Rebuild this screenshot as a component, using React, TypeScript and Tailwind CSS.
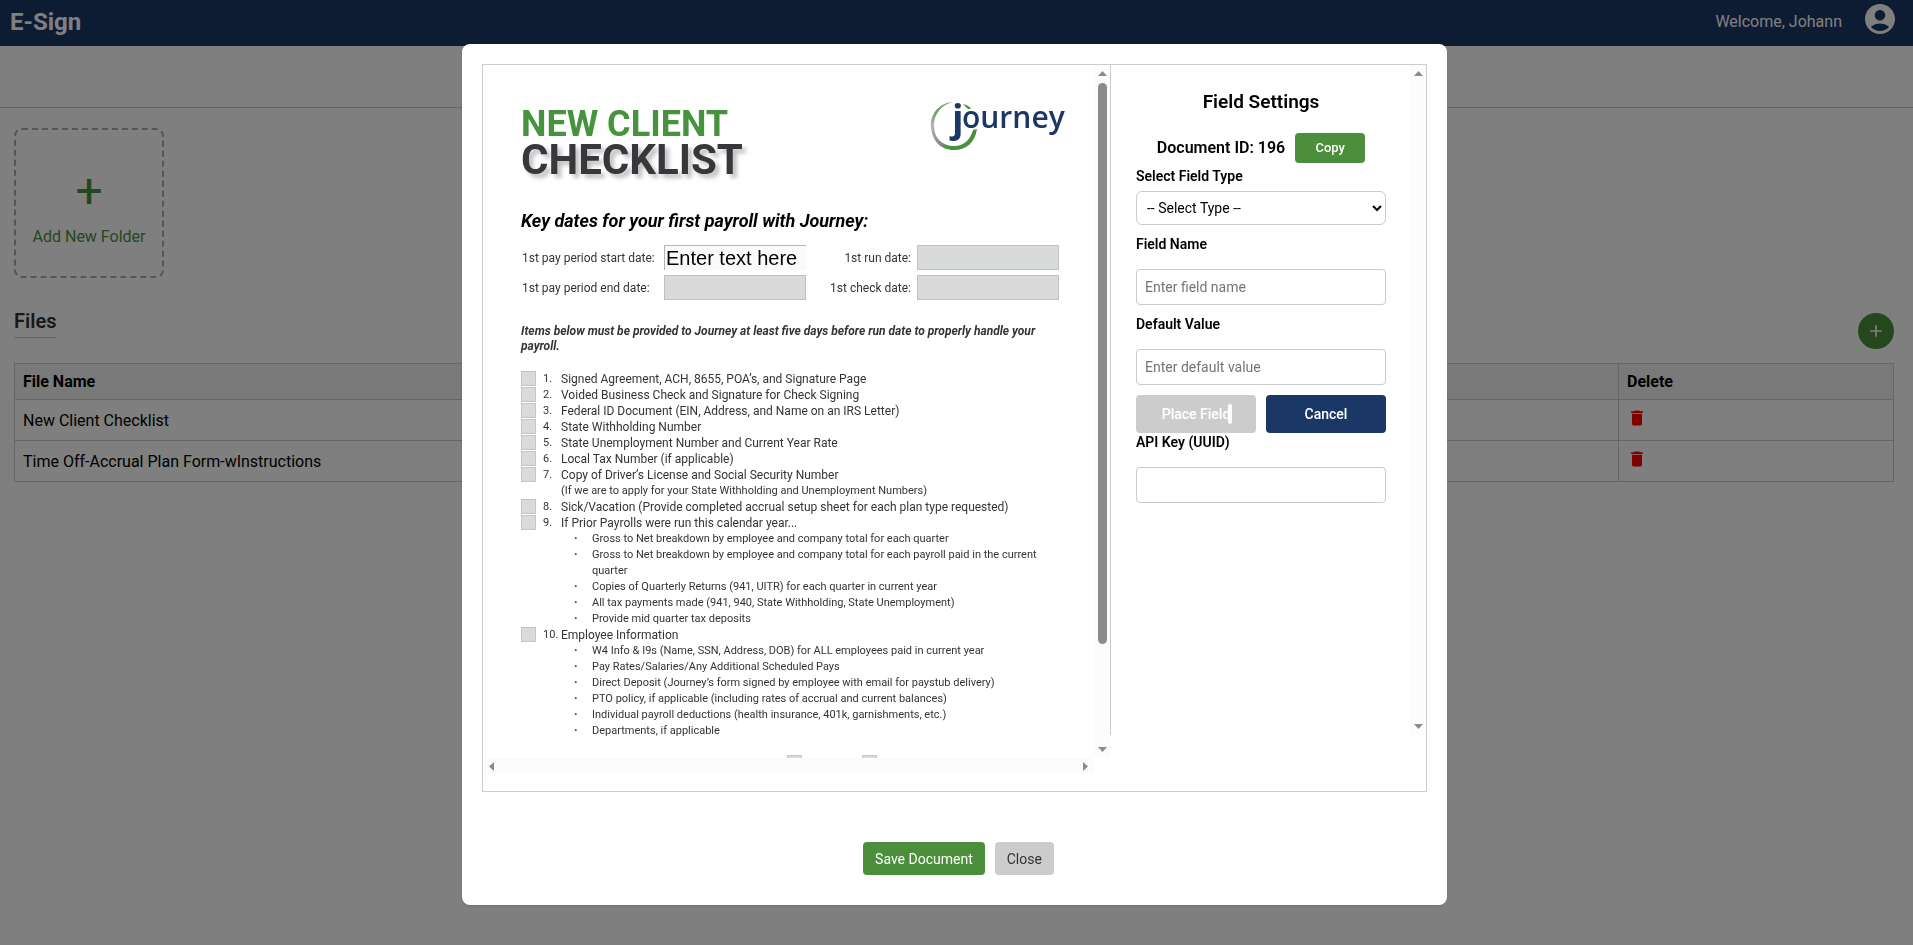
import { MdAccountCircle, MdAdd, MdDelete } from 'react-icons/md';

const files = ['New Client Checklist', 'Time Off-Accrual Plan Form-wInstructions'];

type Item = { n: number; text: string; note?: string; sub?: string[] };

const items: Item[] = [
    { n: 1, text: 'Signed Agreement, ACH, 8655, POA’s, and Signature Page' },
    { n: 2, text: 'Voided Business Check and Signature for Check Signing' },
    { n: 3, text: 'Federal ID Document (EIN, Address, and Name on an IRS Letter)' },
    { n: 4, text: 'State Withholding Number' },
    { n: 5, text: 'State Unemployment Number and Current Year Rate' },
    { n: 6, text: 'Local Tax Number (if applicable)' },
    {
        n: 7,
        text: 'Copy of Driver’s License and Social Security Number',
        note: '(If we are to apply for your State Withholding and Unemployment Numbers)',
    },
    { n: 8, text: 'Sick/Vacation (Provide completed accrual setup sheet for each plan type requested)' },
    {
        n: 9,
        text: 'If Prior Payrolls were run this calendar year...',
        sub: [
            'Gross to Net breakdown by employee and company total for each quarter',
            'Gross to Net breakdown by employee and company total for each payroll paid in the current quarter',
            'Copies of Quarterly Returns (941, UITR) for each quarter in current year',
            'All tax payments made (941, 940, State Withholding, State Unemployment)',
            'Provide mid quarter tax deposits',
        ],
    },
    {
        n: 10,
        text: 'Employee Information',
        sub: [
            'W4 Info & I9s (Name, SSN, Address, DOB) for ALL employees paid in current year',
            'Pay Rates/Salaries/Any Additional Scheduled Pays',
            'Direct Deposit (Journey’s form signed by employee with email for paystub delivery)',
            'PTO policy, if applicable (including rates of accrual and current balances)',
            'Individual payroll deductions (health insurance, 401k, garnishments, etc.)',
            'Departments, if applicable',
        ],
    },
];

type Direction = 'up' | 'down' | 'left' | 'right';

const arrowPaths: Record<Direction, string> = {
    up: 'M0 7 L4.5 2 L9 7 Z',
    down: 'M0 2 L4.5 7 L9 2 Z',
    left: 'M7 0 L2 4.5 L7 9 Z',
    right: 'M2 0 L7 4.5 L2 9 Z',
};

function Arrow({ direction }: { direction: Direction }) {
    return (
        <svg viewBox="0 0 9 9" className="size-[9px] shrink-0" fill="#8b8b8b" aria-hidden="true">
            <path d={arrowPaths[direction]} />
        </svg>
    );
}

function JourneyLogo() {
    return (
        <svg viewBox="0 0 140 52" className="-mr-1 h-[52px] w-[140px] overflow-visible" role="img" aria-label="journey">
            <defs>
                <linearGradient id="ring" x1="0" y1="0" x2="1" y2="1">
                    <stop offset="0.1" stopColor="#4b8f3c" />
                    <stop offset="0.25" stopColor="#b5b5b5" />
                    <stop offset="0.5" stopColor="#8d8d8d" />
                    <stop offset="0.68" stopColor="#4b8f3c" />
                </linearGradient>
            </defs>
            <path
                d="M27 1 C13 2 4 13 5 26 C6 40 15 49 28 49 C41 49 49 41 51 28 L47 29 C44 39 38 45 28 45 C16 45 8 37 8 25 C8 13 15 4 27 1 Z"
                fill="url(#ring)"
            />
            <path d="M37 3 C41 4 43 5 45 8 L42 8 C40 6 39 5 37 3 Z" fill="#4b8f3c" />
            <g fill="#1a3766" stroke="#fff" strokeWidth="2" paintOrder="stroke">
                <text x="26" y="31" className="text-[38px] font-bold [font-family:'Open_Sans',sans-serif]">
                    j
                </text>
                <text x="36" y="27" className="text-[30px] font-semibold [font-family:'Open_Sans',sans-serif]">
                    ourney
                </text>
            </g>
        </svg>
    );
}

function Checklist() {
    return (
        <ol className="mt-[17px] text-xs/4 text-[#333436]">
            {items.map((item) => (
                <li key={item.n} className="grid grid-cols-[22px_18px_1fr]">
                    <input
                        type="checkbox"
                        aria-label={item.text}
                        className="h-[15px] w-[15px] appearance-none border border-[#c3c6c5] bg-[#d8dbda]"
                    />
                    <span className="text-[11px]/4">{item.n}.</span>
                    <span>{item.text}</span>
                    {item.note && <span className="col-start-3 text-[11px]/4">{item.note}</span>}
                    {item.sub && (
                        <ul className="col-start-3 pl-[13px] text-[11px]/4">
                            {item.sub.map((line) => (
                                <li key={line} className="grid grid-cols-[18px_1fr]">
                                    <span className="font-black">·</span>
                                    <span>{line}</span>
                                </li>
                            ))}
                        </ul>
                    )}
                </li>
            ))}
        </ol>
    );
}

function DateField({ id, label, value }: { id: string; label: string; value?: string }) {
    return (
        <>
            <label htmlFor={id} className="text-xs/4 text-[#333436]">
                {label}
            </label>
            {value ? (
                <input
                    id={id}
                    defaultValue={value}
                    className="h-[25px] w-full border-t border-l border-[#b4b4b4] bg-[#fafafa] pl-px text-xl/6 text-black [font-family:'Liberation_Sans',sans-serif]"
                />
            ) : (
                <input id={id} className="h-[25px] w-full border border-[#bfc1c0] bg-[#d8dbda]" />
            )}
        </>
    );
}

function PdfPage() {
    return (
        <div className="h-[693px] min-w-0 overflow-hidden pr-8 pl-[38px] [grid-area:page]">
            <div className="flex items-start justify-between pt-9">
                <h1 className="pt-[5px] font-bold">
                    <span className="block text-[36px]/[36px] text-[#47923d]">NEW CLIENT</span>
                    <span className="block text-[42px]/[36px] text-[#37383b] [text-shadow:4px_4px_4px_rgb(0_0_0/0.25)]">
                        CHECKLIST
                    </span>
                </h1>
                <JourneyLogo />
            </div>
            <h2 className="mt-[31px] text-lg/6 font-bold text-black italic">
                Key dates for your first payroll with Journey:
            </h2>
            <div className="mt-3 grid grid-cols-[142px_142px_1fr_142px] items-center gap-y-[5px] pr-[3px] pl-px">
                <DateField id="start-date" label="1st pay period start date:" value="Enter text here" />
                <div className="contents [&>label]:pr-[6px] [&>label]:text-right">
                    <DateField id="run-date" label="1st run date:" />
                </div>
                <DateField id="end-date" label="1st pay period end date:" />
                <div className="contents [&>label]:pr-[6px] [&>label]:text-right">
                    <DateField id="check-date" label="1st check date:" />
                </div>
            </div>
            <p className="mt-6 text-xs/[15px] font-bold text-[#333436] italic">
                Items below must be provided to Journey at least five days before run date to properly handle your
                payroll.
            </p>
            <Checklist />
            <div className="mt-4 flex gap-[60px] pl-[266px]">
                <input type="checkbox" aria-label="Yes" className="h-[15px] w-[15px] appearance-none border border-[#c3c6c5] bg-[#d8dbda]" />
                <input type="checkbox" aria-label="No" className="h-[15px] w-[15px] appearance-none border border-[#c3c6c5] bg-[#d8dbda]" />
            </div>
        </div>
    );
}

function PdfViewer() {
    return (
        <div className="grid min-w-0 flex-1 grid-cols-[minmax(0,1fr)_16px] grid-rows-[auto_16px] self-start [grid-template-areas:'page_bar''foot_corner']">
            <PdfPage />
            <div className="flex flex-col items-center gap-[5px] bg-[#fcfcfc] py-1 [grid-area:bar]">
                <Arrow direction="up" />
                <div className="h-[561px] w-[9px] rounded-full bg-[#8b8b8b]" />
                <div className="mt-auto">
                    <Arrow direction="down" />
                </div>
            </div>
            <div className="flex items-center justify-between bg-[#fcfcfc] px-1 [grid-area:foot]">
                <Arrow direction="left" />
                <Arrow direction="right" />
            </div>
        </div>
    );
}

function TextField({ id, label, placeholder }: { id: string; label: string; placeholder?: string }) {
    return (
        <div className="flex flex-col gap-4">
            <label htmlFor={id} className="text-sm/[18px] font-semibold">
                {label}
            </label>
            <input
                id={id}
                placeholder={placeholder}
                className="h-9 rounded border border-[#ccc] px-2 text-sm placeholder:text-[#757575]"
            />
        </div>
    );
}

function FieldSettings() {
    return (
        <aside className="flex h-[670px] w-[316px] shrink-0 border-l border-[#ccc]">
            <div className="flex flex-1 flex-col pt-[25px] pr-6 pl-[25px] text-black">
                <h3 className="text-center text-[19px]/6 font-semibold">Field Settings</h3>
                <div className="mt-[19px] flex items-center justify-center gap-[10px]">
                    <span className="font-semibold">Document ID: 196</span>
                    <button className="h-[30px] w-[70px] rounded bg-[#4b8f3c] text-[13px] font-medium text-white">
                        Copy
                    </button>
                </div>
                <label htmlFor="field-type" className="mt-1 text-sm/[18px] font-semibold">
                    Select Field Type
                </label>
                <select
                    id="field-type"
                    className="mt-[6px] h-[34px] rounded-md border border-[#ccc] bg-white px-[6px] text-sm"
                >
                    <option>-- Select Type --</option>
                </select>
                <div className="mt-[10px] flex flex-col gap-[10px]">
                    <TextField id="field-name" label="Field Name" placeholder="Enter field name" />
                    <TextField id="default-value" label="Default Value" placeholder="Enter default value" />
                    <div className="grid grid-cols-2 gap-[10px] text-sm font-medium text-white">
                        <button className="relative h-[38px] rounded bg-[#ccc]">
                            Place Field
                            <span className="absolute top-[9px] left-[92px] h-5 w-1 rounded-full bg-white" />
                        </button>
                        <button className="h-[38px] rounded bg-[#1a3766]">Cancel</button>
                    </div>
                </div>
                <TextField id="api-key" label="API Key (UUID)" />
            </div>
            <div className="flex w-4 flex-col items-center justify-between bg-[#fcfcfc] py-1">
                <Arrow direction="up" />
                <Arrow direction="down" />
            </div>
        </aside>
    );
}

function DocumentModal() {
    return (
        <div className="fixed inset-0 flex items-start justify-center bg-black/50 pt-11 pr-1">
            <div
                role="dialog"
                aria-modal="true"
                aria-label="Field Settings"
                className="flex w-[985px] max-w-full flex-col rounded-lg bg-white p-5 pb-[30px] shadow"
            >
                <div className="flex h-[728px] border border-[#ccc]">
                    <PdfViewer />
                    <FieldSettings />
                </div>
                <div className="mt-[50px] flex justify-center gap-[10px] pl-2 text-sm">
                    <button className="h-[33px] rounded bg-[#4b8f3c] px-3 text-white">Save Document</button>
                    <button className="h-[33px] rounded bg-[#ccc] px-3 text-[#333]">Close</button>
                </div>
            </div>
        </div>
    );
}

export default function App() {
    return (
        <div className="min-h-screen bg-white text-black [font-family:Roboto,sans-serif]">
            <header className="flex h-[46px] items-center justify-between bg-[#1a3766] pr-[15px] pl-[10px] text-white">
                <div className="pb-[3px] text-2xl font-bold">E-Sign</div>
                <div className="flex items-center gap-5">
                    <span className="pb-0.5">Welcome, Johann</span>
                    <MdAccountCircle className="mb-2 size-9" />
                </div>
            </header>
            <div className="h-[62px] border-b border-[#ccc]" />

            <main className="px-[14px] pt-5 pr-[19px]">
                <button className="flex size-[150px] flex-col items-center justify-center rounded-lg border-2 border-dashed border-[#aaa] text-[#4b8f3c]">
                    <span className="text-5xl/[68px]">+</span>
                    <span>Add New Folder</span>
                </button>

                <div className="mt-[31px] flex items-start justify-between">
                    <h2 className="border-b border-[#ccc] pb-1 text-xl/6 font-semibold text-[#333]">Files</h2>
                    <button
                        aria-label="Add file"
                        className="mt-1 flex size-9 items-center justify-center rounded-full bg-[#4b8f3c] text-white"
                    >
                        <MdAdd className="size-5" />
                    </button>
                </div>

                <table className="mt-[14px] w-full table-fixed border-collapse text-left [&_td]:border [&_td]:border-[#ccc] [&_td]:px-2 [&_th]:border [&_th]:border-[#ccc] [&_th]:px-2">
                    <thead>
                        <tr className="h-9 bg-[#f2f2f2]">
                            <th className="font-bold">File Name</th>
                            <th className="w-[275px] font-bold">Delete</th>
                        </tr>
                    </thead>
                    <tbody>
                        {files.map((name) => (
                            <tr key={name} className="h-[41px]">
                                <td className="pt-px">{name}</td>
                                <td>
                                    <button aria-label={`Delete ${name}`} className="block pb-1 text-[red]">
                                        <MdDelete className="size-5" />
                                    </button>
                                </td>
                            </tr>
                        ))}
                    </tbody>
                </table>
            </main>
            <DocumentModal />
        </div>
    );
}
